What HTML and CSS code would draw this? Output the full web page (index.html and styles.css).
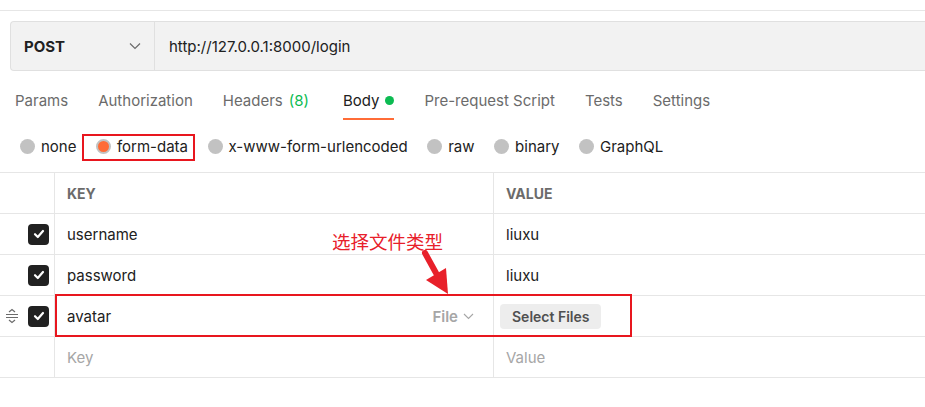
FILE: index.html
```html
<!DOCTYPE html>
<html lang="en">
<head>
<meta charset="utf-8">
<title>Postman request</title>
<link rel="stylesheet" href="styles.css">
</head>
<body>
<div class="topline"></div>
<div class="request-bar">
  <div class="method">
    <span class="method-name">POST</span>
    <svg class="chev" width="12" height="8" viewBox="0 0 12 8"><path d="M1 1.5 L6 6.5 L11 1.5" fill="none" stroke="#6b6b6b" stroke-width="1.2"/></svg>
  </div>
  <div class="url">http://127.0.0.1:8000/login</div>
</div>

<nav class="tabs">
  <span class="tab">Params</span>
  <span class="tab">Authorization</span>
  <span class="tab">Headers <span class="count">(8)</span></span>
  <span class="tab active">Body <span class="dot"></span></span>
  <span class="tab">Pre-request Script</span>
  <span class="tab">Tests</span>
  <span class="tab">Settings</span>
</nav>

<div class="radios">
  <label class="radio"><span class="circle"></span>none</label>
  <label class="radio selected"><span class="circle"></span>form-data<span class="hl-box"></span></label>
  <label class="radio"><span class="circle"></span>x-www-form-urlencoded</label>
  <label class="radio"><span class="circle"></span>raw</label>
  <label class="radio"><span class="circle"></span>binary</label>
  <label class="radio"><span class="circle"></span>GraphQL</label>
</div>

<div class="table">
  <div class="row head">
    <div class="cell ctl"></div>
    <div class="cell key">KEY</div>
    <div class="cell val">VALUE</div>
  </div>
  <div class="row">
    <div class="cell ctl"><span class="check"><svg width="14" height="14" viewBox="0 0 14 14"><path d="M3 7.2 L5.8 10 L11 4" fill="none" stroke="#fff" stroke-width="2.2" stroke-linecap="round" stroke-linejoin="round"/></svg></span></div>
    <div class="cell key">username</div>
    <div class="cell val">liuxu</div>
  </div>
  <div class="row">
    <div class="cell ctl"><span class="check"><svg width="14" height="14" viewBox="0 0 14 14"><path d="M3 7.2 L5.8 10 L11 4" fill="none" stroke="#fff" stroke-width="2.2" stroke-linecap="round" stroke-linejoin="round"/></svg></span></div>
    <div class="cell key">password</div>
    <div class="cell val">liuxu</div>
  </div>
  <div class="row file-row">
    <div class="cell ctl">
      <svg class="drag" width="14" height="16" viewBox="0 0 14 16"><path d="M4 4 L7 1.5 L10 4" fill="none" stroke="#6b6b6b" stroke-width="1.2"/><path d="M1 6.5 H13 M1 9.5 H13" stroke="#6b6b6b" stroke-width="1.2"/><path d="M4 12 L7 14.5 L10 12" fill="none" stroke="#6b6b6b" stroke-width="1.2"/></svg>
      <span class="check"><svg width="14" height="14" viewBox="0 0 14 14"><path d="M3 7.2 L5.8 10 L11 4" fill="none" stroke="#fff" stroke-width="2.2" stroke-linecap="round" stroke-linejoin="round"/></svg></span>
    </div>
    <div class="cell key"><span>avatar</span><span class="type">File <svg width="11" height="7" viewBox="0 0 11 7"><path d="M1 1 L5.5 5.5 L10 1" fill="none" stroke="#a6a6a6" stroke-width="1.1"/></svg></span></div>
    <div class="cell val"><span class="btn">Select Files</span></div>
    <span class="row-box"></span>
    <span class="note">选择文件类型</span>
    <svg class="arrow" width="40" height="50" viewBox="0 0 40 50"><path d="M5 4 L16 24" stroke="#e8202a" stroke-width="6" stroke-linecap="round"/><path d="M6 31 L26 19 L28 45 Z" fill="#e8202a"/></svg>
  </div>
  <div class="row">
    <div class="cell ctl"></div>
    <div class="cell key ph">Key</div>
    <div class="cell val ph">Value</div>
  </div>
</div>
</body>
</html>
```
FILE: styles.css
```css
* { box-sizing: border-box; }
body {
  margin: 0;
  font-family: Inter, "Noto Sans", sans-serif;
  font-size: 15px;
  color: #212121;
  background: #fff;
  width: 925px;
  overflow: hidden;
}
.topline {
  height: 11px;
  border-bottom: 1px solid #e6e6e6;
}
.request-bar {
  margin: 10px 0 0 10px;
  height: 50px;
  display: flex;
  background: #f2f2f2;
  border: 1px solid #e0e0e0;
  border-right: none;
  border-radius: 4px 0 0 4px;
}
.method {
  width: 144px;
  display: flex;
  align-items: center;
  justify-content: space-between;
  padding: 0 13px 0 13px;
  border-right: 1px solid #e0e0e0;
}
.method-name { font-weight: 700; }
.url {
  display: flex;
  align-items: center;
  padding-left: 14px;
}
.tabs {
  display: flex;
  padding: 8px 0 0 15px;
  height: 50px;
  align-items: stretch;
}
.tab {
  color: #6b6b6b;
  margin-right: 30px;
  display: flex;
  align-items: center;
  gap: 6px;
  position: relative;
}
.tab .count { color: #0cbb52; }
.tab.active { color: #212121; margin-left: 4px; }
.tab.active::after {
  content: "";
  position: absolute;
  left: 0; right: 0;
  top: 39px;
  height: 2px;
  background: #ff6c37;
}
.dot {
  width: 9px; height: 9px;
  border-radius: 50%;
  background: #0cbb52;
  display: inline-block;
}
.radios {
  display: flex;
  align-items: center;
  gap: 19.5px;
  padding-left: 20px;
  height: 50px;
}
.radio {
  display: flex;
  align-items: center;
  gap: 6px;
  position: relative;
  height: 20px;
}
.circle {
  width: 15px; height: 15px;
  border-radius: 50%;
  background: #c2c2c2;
  display: inline-block;
}
.radio.selected .circle {
  background: #ff6c37;
  border: 2px solid #c2c2c2;
}
.hl-box {
  position: absolute;
  left: -14px; right: -7px;
  top: -2px; bottom: -5px;
  border: 2px solid #e8161e;
}
.table {
  margin-top: 1px;
  border-top: 1px solid #e6e6e6;
}
.row {
  display: grid;
  grid-template-columns: 55px 439px 1fr;
  height: 41px;
  border-bottom: 1px solid #e6e6e6;
  position: relative;
}
.cell {
  display: flex;
  align-items: center;
  padding-left: 12px;
}
.cell.ctl {
  border-right: 1px solid #e6e6e6;
  padding: 0 5px 0 0;
  justify-content: flex-end;
  gap: 10px;
}
.cell.key { border-right: 1px solid #e6e6e6; justify-content: space-between; padding-right: 19px; }
.head .cell { font-weight: 700; color: #6b6b6b; font-size: 14px; }
.ph { color: #a6a6a6; }
.check {
  width: 21px; height: 21px;
  border-radius: 4px;
  background: #212121;
  display: flex;
  align-items: center;
  justify-content: center;
}
.drag { margin-right: -1px; }
.type {
  color: #a6a6a6;
  font-weight: 600;
  display: flex;
  align-items: center;
  gap: 5px;
}
.file-row .cell.val { padding-left: 6px; }
.btn {
  background: #ededed;
  border-radius: 4px;
  padding: 0 12px;
  height: 25px;
  display: flex;
  align-items: center;
  font-weight: 600;
  font-size: 14px;
  color: #505050;
}
.row-box {
  position: absolute;
  left: 55px;
  top: -2px;
  width: 577px;
  height: 43px;
  border: 2px solid #e8161e;
}
.note {
  position: absolute;
  left: 332px;
  top: -67px;
  font-family: "Noto Sans CJK SC", sans-serif;
  font-size: 18.5px;
  color: #e8202a;
  line-height: 24px;
}
.arrow {
  position: absolute;
  left: 420px;
  top: -47px;
}
```
